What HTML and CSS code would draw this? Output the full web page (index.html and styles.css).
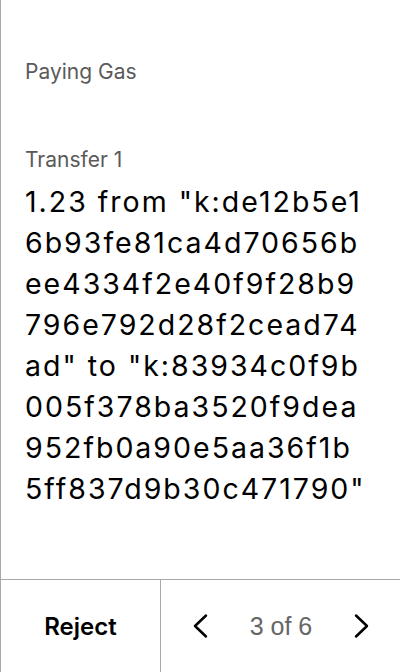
FILE: index.html
```html
<!DOCTYPE html>
<html>
<head>
<meta charset="utf-8">
<link rel="stylesheet" href="styles.css">
</head>
<body>
<div class="screen">
  <main class="content">
    <div class="label label-gas">Paying Gas</div>
    <div class="label label-transfer">Transfer 1</div>
    <div class="detail">1.23 from "k:de12b5e16b93fe81ca4d70656bee4334f2e40f9f28b9796e792d28f2cead74ad" to "k:83934c0f9b005f378ba3520f9dea952fb0a90e5aa36f1b5ff837d9b30c471790"</div>
  </main>
  <footer class="bar">
    <button class="reject">Reject</button>
    <div class="pager">
      <svg class="chev" width="16" height="26" viewBox="0 0 16 26"><path d="M14 2.5 L3 13 L14 23.5" fill="none" stroke="#000" stroke-width="2.5" stroke-linecap="round" stroke-linejoin="round"/></svg>
      <span class="count">3 of 6</span>
      <svg class="chev" width="16" height="26" viewBox="0 0 16 26"><path d="M2 2.5 L13 13 L2 23.5" fill="none" stroke="#000" stroke-width="2.5" stroke-linecap="round" stroke-linejoin="round"/></svg>
    </div>
  </footer>
</div>
</body>
</html>
```
FILE: styles.css
```css
html, body {
  margin: 0;
  padding: 0;
  background: #fff;
}
.screen {
  width: 400px;
  height: 672px;
  box-sizing: border-box;
  border-left: 1px solid #a8a8a8;
  display: flex;
  flex-direction: column;
  font-family: Inter, "Noto Sans", sans-serif;
}
.content {
  flex: 1;
  padding: 57px 30px 0 24px;
}
.label {
  font-size: 21px;
  color: #5a5a5a;
  line-height: 30px;
}
.label-transfer {
  margin-top: 58px;
}
.detail {
  margin-top: 6px;
  font-size: 28.5px;
  letter-spacing: 2px;
  line-height: 41px;
  color: #000;
  word-break: break-all;
}
.bar {
  height: 92px;
  border-top: 1px solid #a8a8a8;
  display: flex;
}
.reject {
  width: 160px;
  border: none;
  border-right: 1px solid #a8a8a8;
  background: #fff;
  font-family: Inter, "Noto Sans", sans-serif;
  font-weight: 600;
  font-size: 24px;
  color: #000;
  padding: 0;
}
.pager {
  flex: 1;
  display: flex;
  align-items: center;
  justify-content: space-between;
  padding: 0 30px 0 31px;
}
.count {
  font-family: "Liberation Sans", Arial, sans-serif;
  font-size: 25px;
  color: #666;
}
.chev {
  display: block;
}
```
